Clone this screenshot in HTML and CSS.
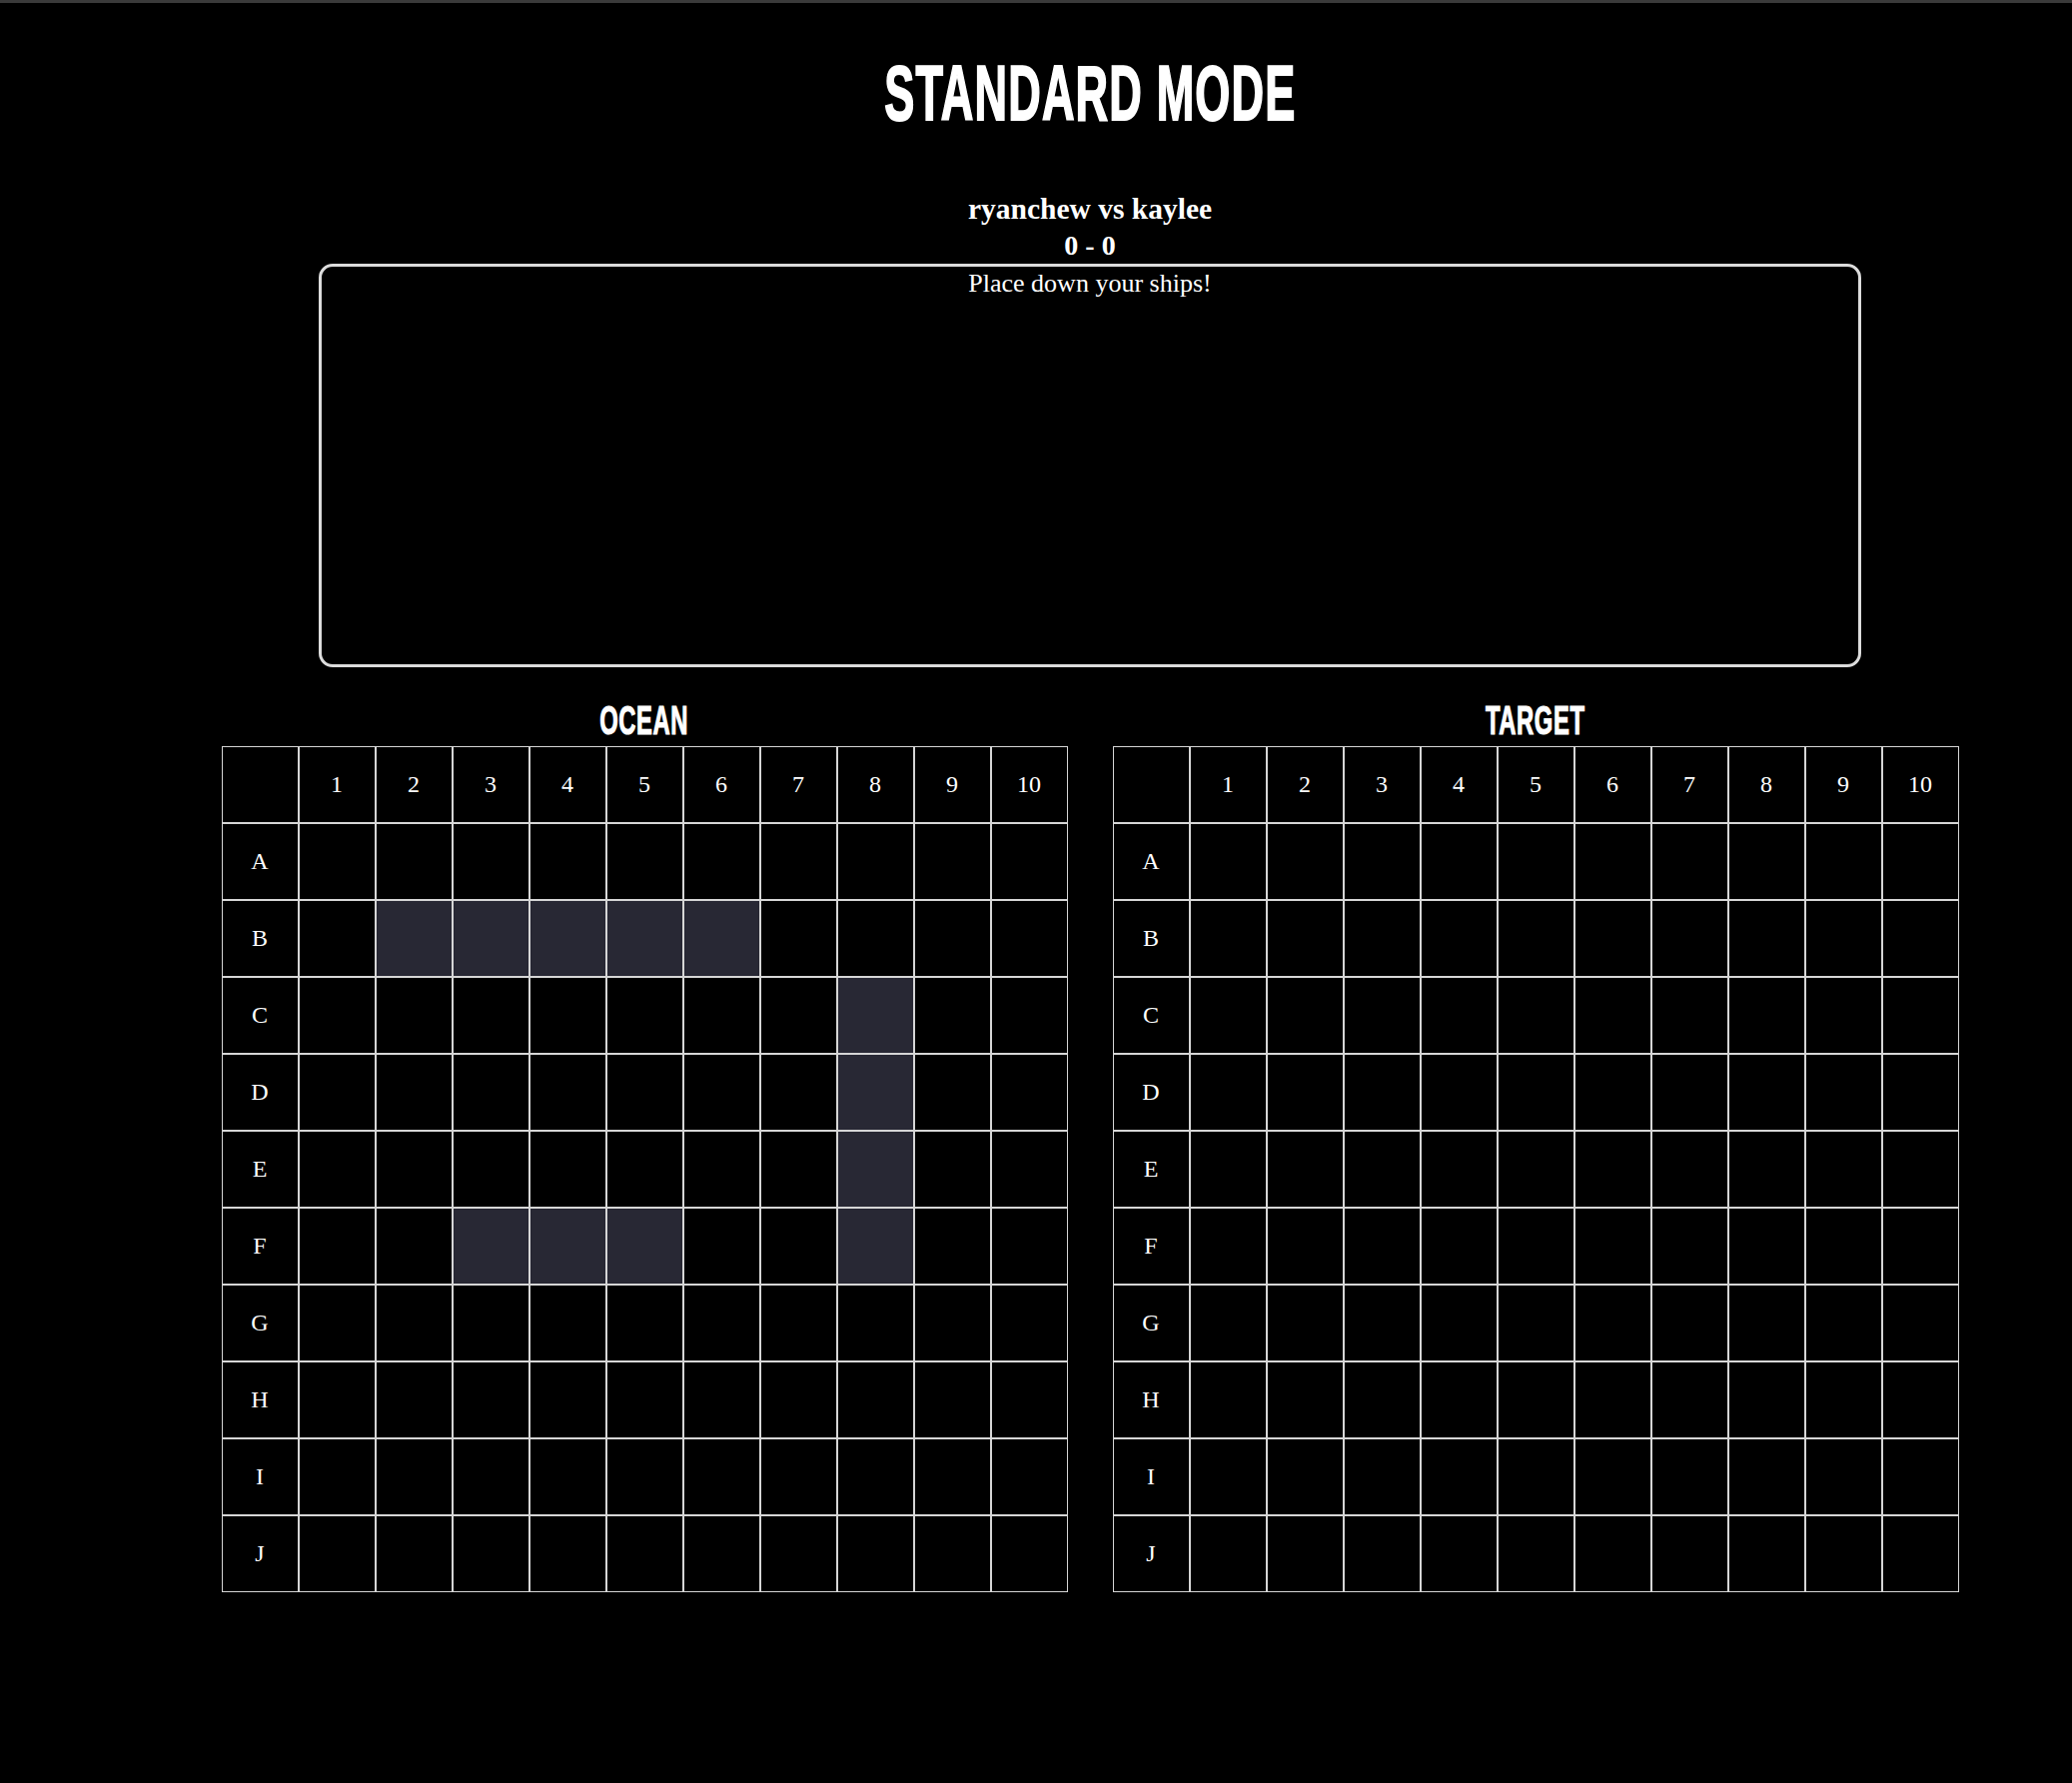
FILE: index.html
```html
<!DOCTYPE html>
<html lang="en">
<head>
<meta charset="utf-8">
<title>Standard Mode</title>
<link rel="stylesheet" href="styles.css">
</head>
<body>
<div class="topbar"></div>
<main class="main">
  <h1 class="title"><span class="condensed">STANDARD MODE</span></h1>
  <div class="players">ryanchew vs kaylee</div>
  <div class="score">0 - 0</div>
  <section class="log">
    <p class="log-line">Place down your ships!</p>
  </section>
  <div class="boards">
    <div class="board">
      <h2 class="board-title"><span class="condensed-sm">OCEAN</span></h2>
      <div class="grid">
        <div class="c"></div><div class="c">1</div><div class="c">2</div><div class="c">3</div><div class="c">4</div><div class="c">5</div><div class="c">6</div><div class="c">7</div><div class="c">8</div><div class="c">9</div><div class="c">10</div>
        <div class="c">A</div><div class="c"></div><div class="c"></div><div class="c"></div><div class="c"></div><div class="c"></div><div class="c"></div><div class="c"></div><div class="c"></div><div class="c"></div><div class="c"></div>
        <div class="c">B</div><div class="c"></div><div class="c s"></div><div class="c s"></div><div class="c s"></div><div class="c s"></div><div class="c s"></div><div class="c"></div><div class="c"></div><div class="c"></div><div class="c"></div>
        <div class="c">C</div><div class="c"></div><div class="c"></div><div class="c"></div><div class="c"></div><div class="c"></div><div class="c"></div><div class="c"></div><div class="c s"></div><div class="c"></div><div class="c"></div>
        <div class="c">D</div><div class="c"></div><div class="c"></div><div class="c"></div><div class="c"></div><div class="c"></div><div class="c"></div><div class="c"></div><div class="c s"></div><div class="c"></div><div class="c"></div>
        <div class="c">E</div><div class="c"></div><div class="c"></div><div class="c"></div><div class="c"></div><div class="c"></div><div class="c"></div><div class="c"></div><div class="c s"></div><div class="c"></div><div class="c"></div>
        <div class="c">F</div><div class="c"></div><div class="c"></div><div class="c s"></div><div class="c s"></div><div class="c s"></div><div class="c"></div><div class="c"></div><div class="c s"></div><div class="c"></div><div class="c"></div>
        <div class="c">G</div><div class="c"></div><div class="c"></div><div class="c"></div><div class="c"></div><div class="c"></div><div class="c"></div><div class="c"></div><div class="c"></div><div class="c"></div><div class="c"></div>
        <div class="c">H</div><div class="c"></div><div class="c"></div><div class="c"></div><div class="c"></div><div class="c"></div><div class="c"></div><div class="c"></div><div class="c"></div><div class="c"></div><div class="c"></div>
        <div class="c">I</div><div class="c"></div><div class="c"></div><div class="c"></div><div class="c"></div><div class="c"></div><div class="c"></div><div class="c"></div><div class="c"></div><div class="c"></div><div class="c"></div>
        <div class="c">J</div><div class="c"></div><div class="c"></div><div class="c"></div><div class="c"></div><div class="c"></div><div class="c"></div><div class="c"></div><div class="c"></div><div class="c"></div><div class="c"></div>
      </div>
    </div>
    <div class="board">
      <h2 class="board-title"><span class="condensed-sm">TARGET</span></h2>
      <div class="grid">
        <div class="c"></div><div class="c">1</div><div class="c">2</div><div class="c">3</div><div class="c">4</div><div class="c">5</div><div class="c">6</div><div class="c">7</div><div class="c">8</div><div class="c">9</div><div class="c">10</div>
        <div class="c">A</div><div class="c"></div><div class="c"></div><div class="c"></div><div class="c"></div><div class="c"></div><div class="c"></div><div class="c"></div><div class="c"></div><div class="c"></div><div class="c"></div>
        <div class="c">B</div><div class="c"></div><div class="c"></div><div class="c"></div><div class="c"></div><div class="c"></div><div class="c"></div><div class="c"></div><div class="c"></div><div class="c"></div><div class="c"></div>
        <div class="c">C</div><div class="c"></div><div class="c"></div><div class="c"></div><div class="c"></div><div class="c"></div><div class="c"></div><div class="c"></div><div class="c"></div><div class="c"></div><div class="c"></div>
        <div class="c">D</div><div class="c"></div><div class="c"></div><div class="c"></div><div class="c"></div><div class="c"></div><div class="c"></div><div class="c"></div><div class="c"></div><div class="c"></div><div class="c"></div>
        <div class="c">E</div><div class="c"></div><div class="c"></div><div class="c"></div><div class="c"></div><div class="c"></div><div class="c"></div><div class="c"></div><div class="c"></div><div class="c"></div><div class="c"></div>
        <div class="c">F</div><div class="c"></div><div class="c"></div><div class="c"></div><div class="c"></div><div class="c"></div><div class="c"></div><div class="c"></div><div class="c"></div><div class="c"></div><div class="c"></div>
        <div class="c">G</div><div class="c"></div><div class="c"></div><div class="c"></div><div class="c"></div><div class="c"></div><div class="c"></div><div class="c"></div><div class="c"></div><div class="c"></div><div class="c"></div>
        <div class="c">H</div><div class="c"></div><div class="c"></div><div class="c"></div><div class="c"></div><div class="c"></div><div class="c"></div><div class="c"></div><div class="c"></div><div class="c"></div><div class="c"></div>
        <div class="c">I</div><div class="c"></div><div class="c"></div><div class="c"></div><div class="c"></div><div class="c"></div><div class="c"></div><div class="c"></div><div class="c"></div><div class="c"></div><div class="c"></div>
        <div class="c">J</div><div class="c"></div><div class="c"></div><div class="c"></div><div class="c"></div><div class="c"></div><div class="c"></div><div class="c"></div><div class="c"></div><div class="c"></div><div class="c"></div>
      </div>
    </div>
  </div>
</main>
</body>
</html>
```
FILE: styles.css
```css
html, body {
  margin: 0;
  padding: 0;
  background: #000;
  color: #fff;
}
body {
  font-family: "Liberation Serif", "Times New Roman", serif;
}
.topbar {
  height: 3px;
  background: #3a3a3a;
}
.main {
  margin-left: 108px;
  display: flex;
  flex-direction: column;
  align-items: center;
}
.title {
  margin: 52px 0 0;
  font-family: "Liberation Sans", Arial, sans-serif;
  font-weight: 700;
  font-size: 77px;
  line-height: 77px;
  text-align: center;
}
.condensed {
  display: inline-block;
  transform: scaleX(0.585);
  -webkit-text-stroke: 2px #fff;
  letter-spacing: 2px;
}
.players {
  margin-top: 59px;
  font-weight: 700;
  font-size: 29.5px;
  line-height: 37px;
}
.score {
  font-weight: 700;
  font-size: 28px;
  line-height: 36px;
}
.log {
  box-sizing: border-box;
  width: 1544px;
  height: 404px;
  border: 3px solid #dcdcdc;
  border-radius: 14px;
}
.log-line {
  margin: 0;
  text-align: center;
  font-size: 26px;
  line-height: 33px;
}
.boards {
  display: flex;
  gap: 45px;
  margin-top: 27px;
}
.board {
  display: flex;
  flex-direction: column;
  align-items: center;
}
.board-title {
  margin: 0;
  font-family: "Liberation Sans", Arial, sans-serif;
  font-weight: 700;
  font-size: 41px;
  line-height: 52px;
}
.condensed-sm {
  display: inline-block;
  transform: scaleX(0.58);
  -webkit-text-stroke: 1.2px #fff;
  letter-spacing: 1px;
}
.grid {
  display: grid;
  grid-template-columns: repeat(11, 77px);
  grid-auto-rows: 77px;
}
.c {
  box-sizing: border-box;
  border: 1px solid #d6d6d6;
  display: flex;
  align-items: center;
  justify-content: center;
  font-size: 24px;
}
.s {
  background: #282834;
}
```
